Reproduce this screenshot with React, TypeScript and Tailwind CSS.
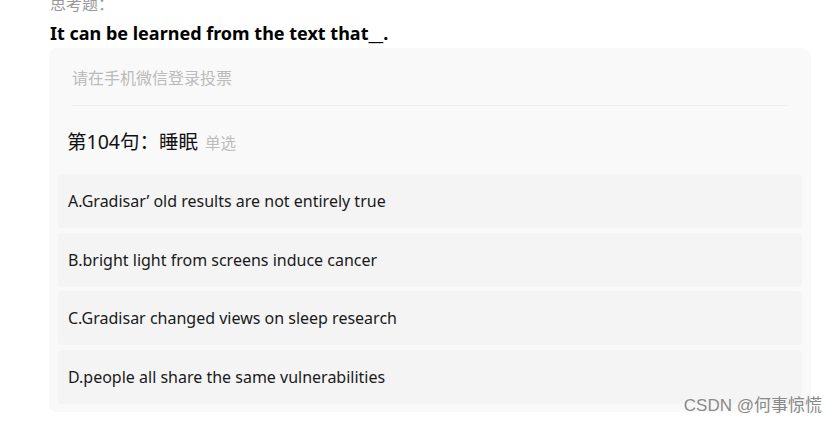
import React from "react";

// Vote options shown under the question
const options = [
  "A.Gradisar\u2019 old results are not entirely true",
  "B.bright light from screens induce cancer",
  "C.Gradisar changed views on sleep research",
  "D.people all share the same vulnerabilities",
];

const font = {
  fontFamily: '"Noto Sans", "Noto Sans CJK SC", sans-serif',
};

export default function App() {
  return (
    <div className="relative h-[424px] w-[838px] overflow-hidden bg-white" style={font}>
      <div className="ml-[50px] -mt-[8px] text-[16px] leading-[24px] text-[#999]">思考题：</div>
      <div className="ml-[50px] mt-[4px] text-[18px] font-bold leading-[26px] text-black">
        It can be learned from the text that__.
      </div>

      {/* vote card */}
      <div className="ml-[49px] mt-[2px] w-[762px] rounded-[8px] bg-[#f9f9f9] px-[9px] pb-[8px]">
        <div className="mx-[14px] border-b border-[#efefef] pt-[20px] pb-[17px] text-[16px] leading-[20px] text-[#bbb]">
          请在手机微信登录投票
        </div>
        <div className="flex items-baseline px-[9px] pt-[26px] pb-[21px] leading-[20px]">
          <span className="text-[19.5px] text-[#111]">第104句：睡眠</span>
          <span className="ml-[7px] text-[15.5px] text-[#bbb]">单选</span>
        </div>
        <div className="flex flex-col gap-[4.5px]">
          {options.map((opt) => (
            <div
              key={opt}
              className="flex h-[54px] items-center rounded-[4px] bg-[#f4f4f4] px-[10px] text-[16px] text-[#1a1a1a]"
            >
              {opt}
            </div>
          ))}
        </div>
      </div>

      <div
        className="absolute right-[16px] top-[396px] text-[17px] leading-[20px] text-[#8a8a8a]"
        style={{ fontFamily: '"Liberation Sans", "Noto Sans CJK SC", sans-serif' }}
      >
        CSDN @何事惊慌
      </div>
    </div>
  );
}
